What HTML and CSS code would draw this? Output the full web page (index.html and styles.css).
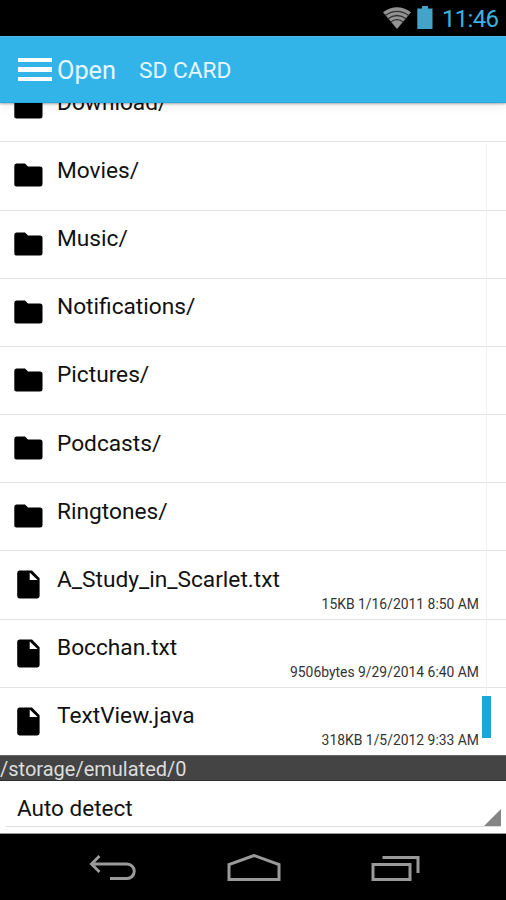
FILE: index.html
```
<!DOCTYPE html>
<html lang="en">
<head>
  <meta charset="UTF-8" />
  <meta name="viewport" content="width=device-width, initial-scale=1.0" />
  <title>Open | SD Card</title>
  <link rel="stylesheet" href="styles.css">
</head>
<body>
  <svg class="defs" width="0" height="0">
    <symbol id="folder" viewBox="0 0 29 24">
      <path d="M2.5 0.5H11l3 3h12a2.5 2.5 0 0 1 2.5 2.5v15a2.5 2.5 0 0 1-2.5 2.5H2.5A2.2 2.2 0 0 1 0.3 21V3A2.5 2.5 0 0 1 2.5 0.5z" />
    </symbol>
    <symbol id="file" viewBox="0 0 23 29">
      <path fill-rule="evenodd" d="M2.5 0.5H15L22.6 8.3V26a2.4 2.4 0 0 1-2.4 2.4H2.5A2.4 2.4 0 0 1 0.2 26V3A2.5 2.5 0 0 1 2.5 0.5zM12.7 2.5V10H20.6z" />
    </symbol>
  </svg>

  <div class="status-bar">
    <svg class="wifi" width="28" height="22" viewBox="0 0 28 22">
      <path class="fan" d="M0 5.2Q14-4.6 28 5.2L14 22z" />
      <path class="gap" d="M2 8.6Q14 0.2 26 8.6M4.5 12Q14 5 23.5 12M7.5 15.3Q14 10 20.5 15.3" />
    </svg>
    <svg class="battery" width="16" height="23" viewBox="0 0 16 23">
      <path d="M5 0h6v2.5h4.5V23H0.3V2.5H5z" />
    </svg>
    <span class="clock">11:46</span>
  </div>

  <header>
    <div class="menu">
      <span></span>
      <span></span>
      <span></span>
    </div>
    <span class="title">Open</span>
    <span class="storage">SD CARD</span>
  </header>

  <div class="list">
    <div class="row">
      <svg class="icon folder"><use href="#folder" /></svg>
      <span class="name">Download/</span>
    </div>
    <div class="row">
      <svg class="icon folder"><use href="#folder" /></svg>
      <span class="name">Movies/</span>
    </div>
    <div class="row">
      <svg class="icon folder"><use href="#folder" /></svg>
      <span class="name">Music/</span>
    </div>
    <div class="row">
      <svg class="icon folder"><use href="#folder" /></svg>
      <span class="name">Notifications/</span>
    </div>
    <div class="row">
      <svg class="icon folder"><use href="#folder" /></svg>
      <span class="name">Pictures/</span>
    </div>
    <div class="row">
      <svg class="icon folder"><use href="#folder" /></svg>
      <span class="name">Podcasts/</span>
    </div>
    <div class="row">
      <svg class="icon folder"><use href="#folder" /></svg>
      <span class="name">Ringtones/</span>
    </div>
    <div class="row">
      <svg class="icon file"><use href="#file" /></svg>
      <span class="name">A_Study_in_Scarlet.txt</span>
      <span class="info">15KB 1/16/2011 8:50 AM</span>
    </div>
    <div class="row">
      <svg class="icon file"><use href="#file" /></svg>
      <span class="name">Bocchan.txt</span>
      <span class="info">9506bytes 9/29/2014 6:40 AM</span>
    </div>
    <div class="row">
      <svg class="icon file"><use href="#file" /></svg>
      <span class="name">TextView.java</span>
      <span class="info">318KB 1/5/2012 9:33 AM</span>
    </div>
    <div class="scroll-track">
      <div class="scroll-thumb"></div>
    </div>
  </div>

  <div class="path">/storage/emulated/0</div>

  <div class="encoding">
    <div class="spinner">
      <span>Auto detect</span>
      <svg width="17" height="17" viewBox="0 0 17 17"><path d="M17 0V17H0z" /></svg>
    </div>
  </div>

  <nav>
    <svg width="48" height="28" viewBox="0 0 48 28">
      <path d="M10.5 2L2.5 10L10.5 18M2.5 10H38a7.2 7.2 0 0 1 0 14.5H21" />
    </svg>
    <svg width="54" height="28" viewBox="0 0 54 28">
      <path d="M2 25.5V10.5L27 1.5L52 10.5V25.5z" />
    </svg>
    <svg width="50" height="28" viewBox="0 0 50 28">
      <path d="M2 10.5H39V25.5H2zM11.5 3.5H47V19" />
    </svg>
  </nav>
</body>
</html>
```

FILE: styles.css
```
* {
  box-sizing: border-box;
}

body {
  margin: 0;
  height: 900px;
  font-family: Roboto, sans-serif;
  background: #fff;
  color: #111;
  display: flex;
  flex-direction: column;
  overflow: hidden;
}

.defs {
  position: absolute;
}

.status-bar {
  height: 36px;
  flex: none;
  background: #000;
  display: flex;
  align-items: flex-start;
  justify-content: flex-end;
  padding: 6px 8px 0 0;
}

.wifi {
  margin-top: 1px;
}

.wifi .fan {
  fill: #929292;
}

.wifi .gap {
  fill: none;
  stroke: #303030;
  stroke-width: 1.3;
}

.battery {
  margin-left: 6px;
  fill: #43a3c8;
}

.clock {
  margin-left: 9px;
  width: 56px;
  font-size: 24px;
  letter-spacing: -0.7px;
  line-height: 26px;
  white-space: nowrap;
  color: #3cb2e0;
}

header {
  position: relative;
  z-index: 1;
  height: 67px;
  flex: none;
  display: flex;
  align-items: center;
  padding-left: 18px;
  background: #33b4e8;
  border-top: 1px solid #45bdec;
  border-bottom: 1px solid #29a9dc;
  box-shadow: 0 1px 2px rgba(0, 0, 0, 0.3), 0 3px 10px rgba(0, 0, 0, 0.08);
  color: #e6f7ff;
}

.menu {
  width: 34px;
  display: flex;
  flex-direction: column;
  gap: 5px;
}

.menu span {
  height: 4.6px;
  background: #fff;
}

.title {
  margin-left: 5px;
  padding-top: 2px;
  width: 82px;
  font-size: 25.3px;
}

.storage {
  padding-top: 2px;
  font-size: 22.7px;
}

.list {
  position: relative;
  height: 652px;
  flex: none;
  display: flex;
  flex-direction: column;
  justify-content: flex-end;
  overflow: hidden;
}

.row {
  height: 68.2px;
  flex: none;
  display: grid;
  grid-template-columns: 43px 1fr;
  grid-template-rows: 43px 1fr;
  padding: 0 27px 0 14px;
  border-top: 1px solid #e2e4e4;
}

.icon {
  fill: #000;
}

.icon.folder {
  width: 29px;
  height: 24px;
  margin-top: 21px;
}

.icon.file {
  width: 23px;
  height: 29px;
  margin: 19px 0 0 3px;
}

.name {
  padding-top: 14.5px;
  font-size: 22.7px;
  line-height: 28px;
  white-space: nowrap;
}

.info {
  grid-column: 1 / 3;
  padding-top: 0.5px;
  text-align: right;
  font-size: 13.9px;
  line-height: 18px;
  color: #333;
}

.scroll-track {
  position: absolute;
  top: 41px;
  right: 15px;
  bottom: 17px;
  width: 9px;
  background: linear-gradient(#f0f0f0, #f0f0f0) center / 1px 100% no-repeat;
  display: flex;
  align-items: flex-end;
}

.scroll-thumb {
  width: 9px;
  height: 42px;
  background: #1ca8d4;
}

.path {
  height: 26px;
  flex: none;
  background: #444;
  border-top: 1px solid #666;
  border-bottom: 1px solid #2c2c2c;
  color: #ddd;
  font-size: 20px;
  line-height: 26px;
}

.encoding {
  height: 53px;
  flex: none;
  padding: 0 5px 5px 6px;
  border-bottom: 1px solid #999;
}

.spinner {
  height: 46px;
  display: flex;
  justify-content: space-between;
  align-items: flex-end;
  padding-left: 11px;
  border-bottom: 1px solid #ddd;
  font-size: 22.5px;
}

.spinner span {
  line-height: 28px;
  padding-bottom: 4px;
}

.spinner svg {
  fill: #858585;
}

nav {
  flex: 1;
  display: flex;
  align-items: flex-start;
  justify-content: space-between;
  padding: 20px 85px 0 89px;
  background: #000;
}

nav svg {
  fill: none;
  stroke: #9a9a9a;
  stroke-width: 3;
}
```
